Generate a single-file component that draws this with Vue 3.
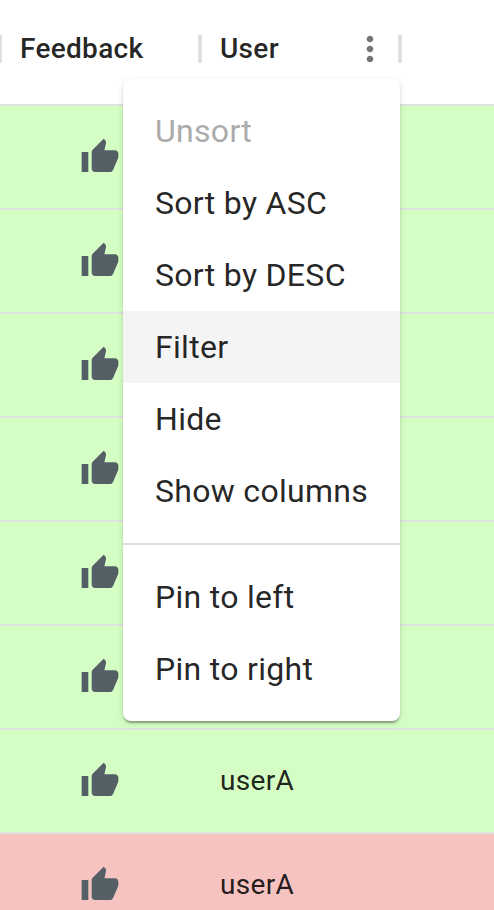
<script setup>
const rows = [
  ...Array.from({ length: 6 }, (_, i) => ({ id: i, user: '', tone: 'good' })),
  { id: 6, user: 'userA', tone: 'good' },
  { id: 7, user: 'userA', tone: 'bad' },
]
const sortItems = [
  { label: 'Unsort', disabled: true },
  { label: 'Sort by ASC' },
  { label: 'Sort by DESC' },
  { label: 'Filter', active: true },
  { label: 'Hide' },
  { label: 'Show columns' },
]
const pinItems = ['Pin to left', 'Pin to right']
</script>

<template>
  <div class="grid">
    <header class="head">
      <div class="cell"><span class="title">Feedback</span></div>
      <div class="cell">
        <span class="title">User</span>
        <svg class="icon more" viewBox="0 0 24 24">
          <path d="M12 8c1.1 0 2-.9 2-2s-.9-2-2-2-2 .9-2 2 .9 2 2 2zm0 2c-1.1 0-2 .9-2 2s.9 2 2 2 2-.9 2-2-.9-2-2-2zm0 6c-1.1 0-2 .9-2 2s.9 2 2 2 2-.9 2-2-.9-2-2-2z" />
        </svg>
      </div>
      <div class="cell rest"></div>
    </header>

    <div v-for="row in rows" :key="row.id" class="row" :class="row.tone">
      <div class="thumb">
        <svg class="icon" viewBox="0 0 24 24">
          <path d="M1 21h4V9H1v12zm22-11c0-1.1-.9-2-2-2h-6.31l.95-4.57.03-.32c0-.41-.17-.79-.44-1.06L14.17 1 7.59 7.59C7.22 7.95 7 8.45 7 9v10c0 1.1.9 2 2 2h9c.83 0 1.54-.5 1.84-1.22l3.02-7.05c.09-.23.14-.47.14-.73v-2z" />
        </svg>
      </div>
      <div v-if="row.user" class="name">{{ row.user }}</div>
    </div>

    <div class="menu" role="menu">
      <div
        v-for="item in sortItems"
        :key="item.label"
        class="item"
        :class="{ disabled: item.disabled, active: item.active }"
        role="menuitem"
      >{{ item.label }}</div>
      <div class="divider"></div>
      <div v-for="label in pinItems" :key="label" class="item" role="menuitem">{{ label }}</div>
    </div>
  </div>
</template>

<style>
body {
  margin: 0;
  background: #fff;
}
</style>

<style scoped>
.grid {
  position: relative;
  width: 494px;
  height: 910px;
  overflow: hidden;
  box-sizing: border-box;
  background: #fff;
  color: rgba(0, 0, 0, 0.87);
  font-family: Roboto, "Liberation Sans", sans-serif;
  font-size: 28px;
  letter-spacing: 0.01071em;
}
.head {
  display: flex;
  align-items: center;
  height: 106px;
  padding-bottom: 6px;
  box-sizing: border-box;
  border-bottom: 2px solid #e0e0e0;
  font-weight: 500;
}
.cell {
  position: relative;
  display: flex;
  align-items: center;
  justify-content: space-between;
  box-sizing: border-box;
  width: 200px;
  height: 56px;
  padding: 0 10px 0 20px;
}
.cell::before {
  content: "";
  position: absolute;
  left: -2px;
  top: 14px;
  width: 4px;
  height: 28px;
  background: #e0e0e0;
}
.cell.rest {
  width: 94px;
}
.title {
  padding-bottom: 2px;
}
.icon {
  display: block;
  width: 40px;
  height: 40px;
  fill: #556066;
}
.icon.more {
  fill: #757575;
}
.row {
  display: flex;
  align-items: center;
  box-sizing: border-box;
  height: 104px;
  border-bottom: 2px solid #e0e0e0;
}
.good {
  background: #d4fec3;
}
.bad {
  background: #f6c3c0;
}
.thumb {
  display: flex;
  justify-content: center;
  width: 200px;
}
.name {
  padding: 0 0 2px 20px;
}
.menu {
  position: absolute;
  left: 123px;
  top: 79px;
  width: 277px;
  padding: 16px 0;
  box-sizing: border-box;
  border-radius: 8px;
  background: #fff;
  box-shadow: 0 4px 2px -2px rgba(0, 0, 0, 0.2), 0 2px 2px rgba(0, 0, 0, 0.14), 0 2px 6px rgba(0, 0, 0, 0.12);
  font-size: 32px;
  line-height: 48px;
  letter-spacing: 0.00938em;
}
.item {
  padding: 12px 32px;
  white-space: nowrap;
}
.item.disabled {
  color: #ababab;
}
.item.active {
  background: #f4f4f4;
}
.divider {
  height: 2px;
  margin: 16px 0;
  background: #e0e0e0;
}
</style>
